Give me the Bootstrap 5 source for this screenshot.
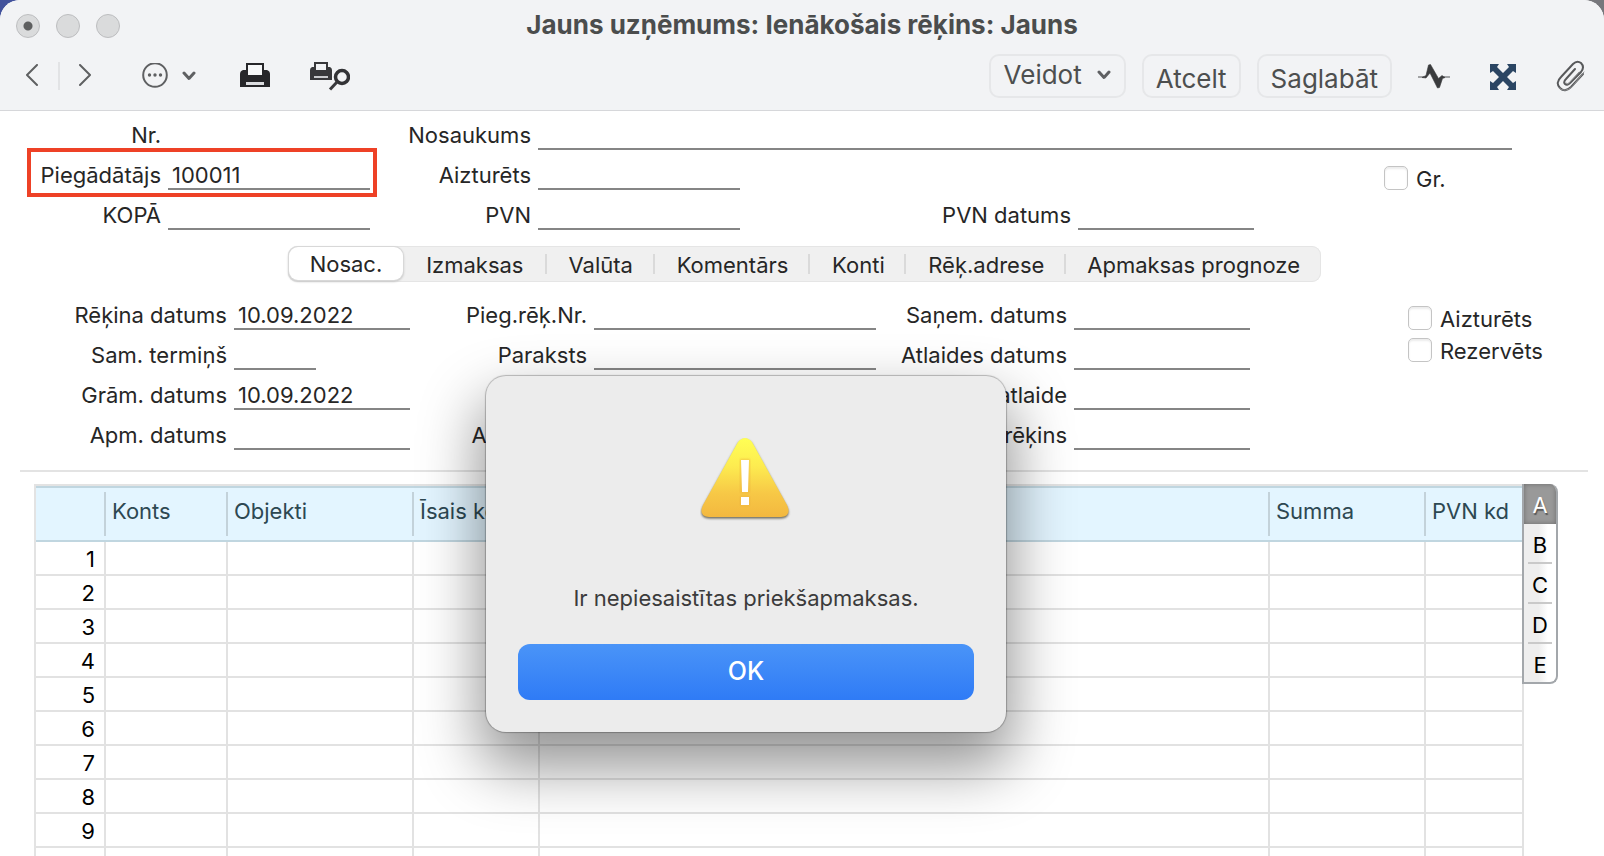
<!DOCTYPE html>
<html lang="lv">
<head>
<meta charset="utf-8">
<meta name="viewport" content="width=device-width, initial-scale=1">
<title>Jauns uzņēmums: Ienākošais rēķins: Jauns</title>
<link href="https://cdn.jsdelivr.net/npm/bootstrap@5.3.0/dist/css/bootstrap.min.css" rel="stylesheet">
<style>
  body { font-family: Inter, "Liberation Sans", sans-serif; font-size: 22px; line-height: 32px; color: #262626; background: linear-gradient(90deg, #42529c 50%, #77777c 50%); }
  .app-window { border-radius: 20px 20px 0 0; background: #fff; }

  .window-head { background: #f2f3f5; border-bottom: 1px solid #d6d7da; padding-bottom: 10px; color: #4b4d4d; }
  .title-row { display: grid; grid-template-columns: 1fr auto 1fr; align-items: center; height: 52px; padding: 0 16px; }
  .title-row h1 { font-size: 26px; line-height: 32px; font-weight: 700; margin: 0; padding-bottom: 2px; }
  .light { width: 24px; height: 24px; padding: 0; border: 1px solid #bcbdbf; border-radius: 50%; background: #dadbdc; }
  .light-dot { background: radial-gradient(circle, #5e5f60 0 4px, #dadbdc 5px); }
  .toolbar-row { height: 48px; padding: 0 18px 0 25px; }
  .bare { display: flex; align-items: center; padding: 0; border: 0; background: none; color: #5f6062; }
  .tool-sep { width: 2px; height: 28px; background: #e2e3e5; }
  .gap-tool { gap: 19px; }
  .gap-print { gap: 40px; }
  .gap-icons { gap: 39px; margin-left: 26px; }
  .menu-more { gap: 14px; margin: 0 44px 0 49px; }
  .btn-head { --bs-btn-font-size: 26px; --bs-btn-line-height: 32px; --bs-btn-color: #4d4f4f; --bs-btn-border-color: #e6e7e9; --bs-btn-border-width: 2px; --bs-btn-border-radius: 10px; --bs-btn-padding-x: 12px; --bs-btn-padding-y: 0; height: 44px; white-space: nowrap; }
  .btn-menu { padding: 0 13px 2px; gap: 15px; }
  .btn-text { padding-top: 5px; }

  .form-grid { display: grid; column-gap: 7px; grid-auto-rows: 40px; }
  .grid-top { grid-template-rows: 39px; grid-template-columns: minmax(0, 161fr) minmax(0, 202fr) minmax(0, 154fr) minmax(0, 202fr) minmax(0, 324fr) minmax(0, 176fr) minmax(0, 116fr) minmax(0, 128fr); padding-right: 92px; }
  .grid-terms { grid-template-columns: minmax(0, 227fr) minmax(0, 176fr) minmax(0, 170fr) minmax(0, 282fr) minmax(0, 184fr) minmax(0, 176fr) minmax(0, 144fr) minmax(0, 196fr); }
  .form-grid > label { white-space: nowrap; line-height: 30px; display: flex; justify-content: flex-end; align-items: flex-end; }
  .line-input { width: 100%; min-width: 0; border: 0; border-bottom: 2px solid #858585; background: none; padding: 12px 4px 0; color: #262626; outline: 0; line-height: 26px; border-radius: 0; }
  .short-input { width: 82px; }
  .c1 { grid-column: 1; } .c3 { grid-column: 3; } .c4 { grid-column: 4; } .c5 { grid-column: 5; } .c8 { grid-column: 8; }
  .c2 { grid-column: 2; } .c6 { grid-column: 6; } .to-end { grid-column: 4 / 9; }
  .r1 { grid-row: 1; } .r2 { grid-row: 2; } .r3 { grid-row: 3; } .r4 { grid-row: 4; }
  .marked { grid-column: 1 / 3; grid-row: 2; border: 4px solid #ee4126; margin: -2px -7px -7px 27px; pointer-events: none; }
  .tick { display: flex; align-items: center; gap: 8px; height: 32px; white-space: nowrap; }
  .tick label { padding-top: 1px; }
  .tick .form-check-input { width: 24px; height: 24px; margin: 0; border: 1px solid #c4c4c4; border-radius: 5px; box-shadow: inset 0 2px 2px #ececec; flex: none; }
  .tick-single { padding-top: 12px; }
  .tick-pair { padding-top: 12px; grid-row: 1 / 3; }

  .segments { margin: 16px 283px 8px 288px; height: 36px; border-radius: 9px; background: #f0f0f0; box-shadow: inset 0 0 0 1px #e5e5e5; }
  .segments .seg { flex: 1 1 0; min-width: 0; padding: 2px 0 0; border: 0; background: none; color: #262626; line-height: 34px; white-space: nowrap; position: relative; }
  .segments .seg-line::after { content: ""; position: absolute; right: 0; top: 8px; height: 20px; width: 2px; background: #dadada; }
  .segments .seg.active { background: #fff; border-radius: 9px; box-shadow: 0 0 0 1px #d8d8d8, 0 1px 2px 1px #c9c9c9; height: 33px; margin: 1px 0 0 1px; line-height: 31px; }
  .w114 { flex-grow: 114 !important; } .w144 { flex-grow: 144 !important; } .w108 { flex-grow: 108 !important; } .w156 { flex-grow: 156 !important; }
  .w96 { flex-grow: 96 !important; } .w160 { flex-grow: 160 !important; } .w255 { flex-grow: 255 !important; }

  .split { height: 2px; background: #e3e3e3; margin: 20px 16px 12px 20px; }
  .sheet-wrap { padding: 0 46px 0 34px; }
  .sheet { table-layout: fixed; border-collapse: separate; border-spacing: 0; border-left: 2px solid #e3e3e3; border-top: 2px solid #e3e3e3; flex: 1 1 0; width: 100%; color: #000; }
  .sheet th { font-weight: 400; }
  .sheet thead th { height: 56px; padding: 0 0 6px 6px; vertical-align: middle; color: #2d4852; white-space: nowrap; border-top: 2px solid #c0d6e0; border-bottom: 2px solid #c0d6e0; background: linear-gradient(#c3d2da, #c3d2da) right 4px / 2px 44px no-repeat, #e3f5ff; }
  .sheet thead th:last-child { background: #e3f5ff; }
  .sheet tbody th, .sheet tbody td { height: 34px; padding: 2px 0 0; line-height: 30px; border-right: 2px solid #e2e2e2; border-bottom: 2px solid #e2e2e2; }
  .sheet tbody th { text-align: right; padding-right: 9px; }
  .k-no { width: 70px; } .k-acc { width: 122px; } .k-obj { width: 186px; } .k-short { width: 126px; } .k-sum { width: 156px; } .k-vat { width: 98px; }
  .side-tabs { width: 36px; margin-left: -2px; align-self: flex-start; border: 2px solid #a3a7ab; border-top: 0; border-radius: 0 8px 8px 0; background: linear-gradient(90deg, #eee 45%, #fff 75%); overflow: hidden; z-index: 1; }
  .side-tabs button { display: block; width: 100%; height: 40px; padding: 2px 0 0; border: 0; color: #000; line-height: 38px; background: linear-gradient(#c9c9c9, #c9c9c9) center bottom / 24px 2px no-repeat; }
  .side-tabs button:last-child { background: none; height: 38px; }
  .side-tabs button.active { background: #999; color: #fff; text-shadow: 1px 2px 1px #555; box-shadow: inset 0 0 5px #6c6c6c; }

  .alert-box { position: absolute; top: 376px; left: calc(50% - 316px); width: 520px; padding: 62px 32px 32px; border-radius: 20px; background: #ececec; box-shadow: 0 0 1px 1px rgba(0, 0, 0, .25), 0 30px 60px 6px rgba(0, 0, 0, .42); z-index: 5; }
  .alert-box p { color: #3b3b3b; margin: 60px 0 30px; }
  .btn-ok { --bs-btn-color: #fff; --bs-btn-hover-color: #fff; --bs-btn-border-width: 0; --bs-btn-border-radius: 12px; --bs-btn-font-size: 25px; --bs-btn-font-weight: 500; --bs-btn-line-height: 54px; padding: 0 0 2px; height: 56px; background: linear-gradient(#4a94f8, #2f7bf6); }
  .alert-box svg { display: block; }
</style>
</head>
<body class="vh-100 overflow-hidden">
<main class="app-window vh-100 overflow-hidden position-relative">
  <header class="window-head">
    <div class="title-row">
      <div class="d-flex gap-3">
        <button class="light light-dot" type="button" aria-label="Aizvērt"></button>
        <button class="light" type="button" aria-label="Minimizēt"></button>
        <button class="light" type="button" aria-label="Palielināt"></button>
      </div>
      <h1>Jauns uzņēmums: Ienākošais rēķins: Jauns</h1>
    </div>
    <div class="toolbar-row d-flex align-items-center">
      <div class="d-flex align-items-center gap-tool">
        <button class="bare" type="button" aria-label="Atpakaļ"><svg width="14" height="24" fill="none" stroke="currentColor" stroke-width="2" stroke-linecap="round" stroke-linejoin="round"><path d="M12 1L2 11L12 21"/></svg></button>
        <span class="tool-sep"></span>
        <button class="bare" type="button" aria-label="Uz priekšu"><svg width="14" height="24" fill="none" stroke="currentColor" stroke-width="2" stroke-linecap="round" stroke-linejoin="round"><path d="M1 1L11 11L1 21"/></svg></button>
      </div>
      <button class="bare menu-more" type="button" aria-label="Darbības">
        <svg width="26" height="26" viewBox="0 0 26 26"><circle cx="13" cy="12" r="11.800" fill="none" stroke="currentColor" stroke-width="2"/><g fill="currentColor"><circle cx="7.500" cy="12" r="1.700"/><circle cx="13" cy="12" r="1.700"/><circle cx="18.500" cy="12" r="1.700"/></g></svg>
        <svg width="14" height="10" fill="none" stroke="currentColor" stroke-width="3" stroke-linecap="round" stroke-linejoin="round"><path d="M2 2L7 7.500L12 2"/></svg>
      </button>
      <div class="d-flex align-items-center gap-print">
        <button class="bare" type="button" aria-label="Drukāt">
          <svg width="30" height="26" viewBox="0 0 30 26"><path d="M6 0h18v7h3q3 1 3 4v13H0V11q0-3 3-4h3z" fill="#27272a"/><path d="M8 2h14v10H8z" fill="#f7f8f9"/><path d="M6 19h18v3H6z" fill="#dcdde0"/></svg>
        </button>
        <button class="bare" type="button" aria-label="Priekšskatījums">
          <svg width="40" height="30" viewBox="0 0 40 30"><path d="M4 1h14v5h2q2 1 2 3v10H0V9q0-2 2-3h2z" fill="#38383b"/><path d="M6 3h10v6H6z" fill="#f2f3f5"/><path d="M4 15h14v2H4z" fill="#c9cacd"/><circle cx="32" cy="16" r="6.500" fill="none" stroke="#333336" stroke-width="3.500"/><path d="M27 21l-7 7.500" stroke="#39393c" stroke-width="3"/></svg>
        </button>
      </div>
      <div class="d-flex align-items-center gap-3 ms-auto">
        <button class="btn btn-head btn-menu d-flex align-items-center" type="button">Veidot
          <svg width="14" height="10" fill="none" stroke="#5f6062" stroke-width="3" stroke-linecap="round" stroke-linejoin="round"><path d="M2 2L7 7.500L12 2"/></svg>
        </button>
        <button class="btn btn-head btn-text" type="button">Atcelt</button>
        <button class="btn btn-head btn-text" type="button">Saglabāt</button>
      </div>
      <div class="d-flex align-items-center gap-icons">
        <button class="bare" type="button" aria-label="Darbplūsma">
          <svg width="32" height="26" viewBox="0 0 32 26"><path d="M0 14h6M26 14h6" stroke="#a2a3a5" stroke-width="2"/><path d="M4 14.500l4-2L10.500 2l2-.5 8 14 3.500-3 3 2-2.500 1-3 9-2 .5L12 10l-4 5z" fill="#3a3b3d" stroke="#3a3b3d" stroke-width=".6"/></svg>
        </button>
        <button class="bare" type="button" aria-label="Pilnekrāns">
          <svg width="28" height="28" viewBox="0 0 28 28" fill="#2b4563"><path d="M1 2h9L8 5l6 6 6-6-2-3h9v9l-3-2-6 6 6 6 3-2v9h-9l2-3-6-6-6 6 2 3H1v-9l3 2 6-6-6-6-3 2z"/></svg>
        </button>
        <button class="bare" type="button" aria-label="Pielikumi">
          <svg width="30" height="32" viewBox="0 0 30 32" fill="none" stroke="#58595b" stroke-width="2" stroke-linecap="round"><path d="M27 14L15 27Q9 33 4 28Q-1 23 5 17L17 4Q21 0 25 3Q29 7 25 12L14 23Q11 26 9 24Q7 22 10 19L19 9"/><path d="M23 12L13 23Q11 25 10 23M28 12L16 27Q9 33 3 28" stroke="#909193" stroke-width="1"/></svg>
        </button>
      </div>
    </div>
  </header>

  <section class="form-grid grid-top">
    <label class="c1 r1">Nr.</label>
    <label class="c3 r1" for="nosaukums">Nosaukums</label><input class="line-input to-end r1" id="nosaukums" type="text">
    <label class="c1 r2" for="piegadatajs">Piegādātājs</label><input class="line-input c2 r2" id="piegadatajs" type="text" value="100011">
    <div class="marked"></div>
    <label class="c3 r2" for="aizturets-datums">Aizturēts</label><input class="line-input c4 r2" id="aizturets-datums" type="text">
    <div class="c8 r2 tick-single"><div class="tick"><input class="form-check-input" type="checkbox" id="gr"><label for="gr">Gr.</label></div></div>
    <label class="c1 r3" for="kopa">KOPĀ</label><input class="line-input c2 r3" id="kopa" type="text">
    <label class="c3 r3" for="pvn">PVN</label><input class="line-input c4 r3" id="pvn" type="text">
    <label class="c5 r3" for="pvn-datums">PVN datums</label><input class="line-input c6 r3" id="pvn-datums" type="text">
  </section>

  <nav class="segments d-flex">
    <button class="seg w114 active" type="button">Nosac.</button>
    <button class="seg seg-line w144" type="button">Izmaksas</button>
    <button class="seg seg-line w108" type="button">Valūta</button>
    <button class="seg seg-line w156" type="button">Komentārs</button>
    <button class="seg seg-line w96" type="button">Konti</button>
    <button class="seg seg-line w160" type="button">Rēķ.adrese</button>
    <button class="seg w255" type="button">Apmaksas prognoze</button>
  </nav>

  <section class="form-grid grid-terms">
    <label class="c1 r1" for="rekina-datums">Rēķina datums</label><input class="line-input c2 r1" id="rekina-datums" type="text" value="10.09.2022">
    <label class="c3 r1" for="pieg-nr">Pieg.rēķ.Nr.</label><input class="line-input c4 r1" id="pieg-nr" type="text">
    <label class="c5 r1" for="sanem">Saņem. datums</label><input class="line-input c6 r1" id="sanem" type="text">
    <label class="c1 r2" for="termins">Sam. termiņš</label><input class="line-input short-input c2 r2" id="termins" type="text">
    <label class="c3 r2" for="paraksts">Paraksts</label><input class="line-input c4 r2" id="paraksts" type="text">
    <label class="c5 r2" for="atlaides">Atlaides datums</label><input class="line-input c6 r2" id="atlaides" type="text">
    <label class="c1 r3" for="gram">Grām. datums</label><input class="line-input c2 r3" id="gram" type="text" value="10.09.2022">
    <label class="c5 r3" for="atlaide">Kases atlaide</label><input class="line-input c6 r3" id="atlaide" type="text">
    <label class="c1 r4" for="apm">Apm. datums</label><input class="line-input c2 r4" id="apm" type="text">
    <label class="c3 r4" for="veids">Apm. veids</label><input class="line-input c4 r4" id="veids" type="text">
    <label class="c5 r4" for="kredit">Kredīta rēķins</label><input class="line-input c6 r4" id="kredit" type="text">
    <div class="c8 tick-pair">
      <div class="tick"><input class="form-check-input" type="checkbox" id="aizturets"><label for="aizturets">Aizturēts</label></div>
      <div class="tick"><input class="form-check-input" type="checkbox" id="rezervets"><label for="rezervets">Rezervēts</label></div>
    </div>
  </section>

  <div class="split"></div>

  <section class="sheet-wrap d-flex">
    <table class="sheet">
      <colgroup><col class="k-no"><col class="k-acc"><col class="k-obj"><col class="k-short"><col><col class="k-sum"><col class="k-vat"></colgroup>
      <thead><tr><th></th><th>Konts</th><th>Objekti</th><th>Īsais kods</th><th>Apraksts</th><th>Summa</th><th>PVN kd</th></tr></thead>
      <tbody>
        <tr><th>1</th><td></td><td></td><td></td><td></td><td></td><td></td></tr>
        <tr><th>2</th><td></td><td></td><td></td><td></td><td></td><td></td></tr>
        <tr><th>3</th><td></td><td></td><td></td><td></td><td></td><td></td></tr>
        <tr><th>4</th><td></td><td></td><td></td><td></td><td></td><td></td></tr>
        <tr><th>5</th><td></td><td></td><td></td><td></td><td></td><td></td></tr>
        <tr><th>6</th><td></td><td></td><td></td><td></td><td></td><td></td></tr>
        <tr><th>7</th><td></td><td></td><td></td><td></td><td></td><td></td></tr>
        <tr><th>8</th><td></td><td></td><td></td><td></td><td></td><td></td></tr>
        <tr><th>9</th><td></td><td></td><td></td><td></td><td></td><td></td></tr>
        <tr><th></th><td></td><td></td><td></td><td></td><td></td><td></td></tr>
      </tbody>
    </table>
    <div class="side-tabs">
      <button class="active" type="button">A</button>
      <button type="button">B</button>
      <button type="button">C</button>
      <button type="button">D</button>
      <button type="button">E</button>
    </div>
  </section>

  <div class="alert-box text-center" role="alertdialog" aria-labelledby="alert-text">
    <svg class="mx-auto" width="92" height="84" viewBox="0 0 92 84">
      <defs><linearGradient id="warn" x1="0" y1="0" x2="0" y2="1"><stop offset="0" stop-color="#ffff55"/><stop offset=".35" stop-color="#fdec50"/><stop offset=".7" stop-color="#f7c846"/><stop offset="1" stop-color="#f3b83f"/></linearGradient>
      <filter id="soft" x="-10%" y="-10%" width="120%" height="120%"><feGaussianBlur stdDeviation="1.200"/></filter></defs>
      <path d="M38 4Q45-4 52 4L87 67Q92 78 81 79H9Q-2 78 3 67z" fill="#6b6757" transform="translate(0 1.500)" filter="url(#soft)"/>
      <path d="M38 4Q45-4 52 4L87 67Q92 78 81 79H9Q-2 78 3 67z" fill="url(#warn)"/>
      <path d="M40 21h10v34H40zM40 58h10v10H40z" fill="#eeb23f" opacity=".6" filter="url(#soft)"/>
      <path d="M41 22h8l-1 32h-6zM41 59h8v8h-8z" fill="#fff"/>
    </svg>
    <p id="alert-text">Ir nepiesaistītas priekšapmaksas.</p>
    <button class="btn btn-ok w-100" type="button">OK</button>
  </div>
</main>
<script src="https://cdn.jsdelivr.net/npm/bootstrap@5.3.0/dist/js/bootstrap.bundle.min.js"></script>
</body>
</html>
